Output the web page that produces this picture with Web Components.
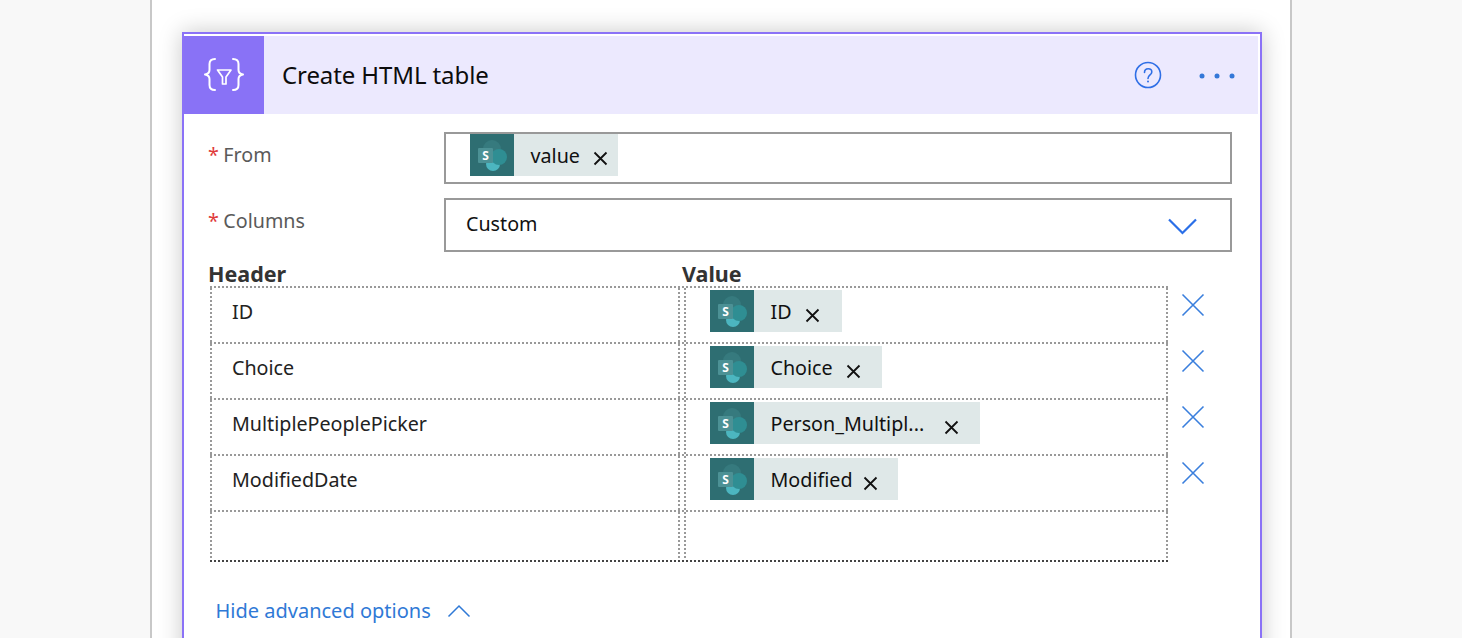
<!DOCTYPE html>
<html lang="en"><head><meta charset="utf-8"><title>Create HTML table</title>
<style>
html,body{margin:0;height:638px;overflow:hidden;background:#f8f8f8;font-family:"Noto Sans","Open Sans",sans-serif}
</style></head><body>
<flow-panel>
<action-card title="Create HTML table">
  <form-field label="From" style="--h:52px;--mt:18px"><token-pill style="--w:148px;--ml:24px;--xgap:13px;--xtop:3px">value</token-pill></form-field>
  <form-field label="Columns" select style="--h:54px;--mt:14px;--pl:20px">Custom</form-field>
  <kv-table>
    <kv-row key="ID"><token-pill style="--w:132px;--xgap:13.500px">ID</token-pill></kv-row>
    <kv-row key="Choice"><token-pill style="--w:172px;--xgap:13px">Choice</token-pill></kv-row>
    <kv-row key="MultiplePeoplePicker"><token-pill style="--w:270px;--xgap:20px">Person_Multipl...</token-pill></kv-row>
    <kv-row key="ModifiedDate"><token-pill style="--w:188px;--xgap:10.200px">Modified</token-pill></kv-row>
    <kv-row empty></kv-row>
  </kv-table>
  <advanced-toggle>Hide advanced options</advanced-toggle>
</action-card>
</flow-panel>
<script>
function def(name, css, html){
  customElements.define(name, class extends HTMLElement{
    connectedCallback(){
      if(this.shadowRoot) return;
      const r=this.attachShadow({mode:'open'});
      r.innerHTML='<style>'+css+'</style>'+(typeof html==='function'?html(this):html);
    }
  });
}
def('flow-panel',
 `:host{display:block;box-sizing:border-box;width:1142px;height:638px;margin-left:150px;background:#fff;border-left:2px solid #c8c8c8;border-right:2px solid #c8c8c8;padding:32px 28px 0 30px;overflow:hidden}`,
 `<slot></slot>`);
def('action-card',
 `:host{display:block;box-sizing:border-box;width:1080px;height:700px;border:2px solid #8b72f7;padding-top:2px;background:#fff;box-shadow:0 0 22px rgba(0,0,0,.22)}
  header{display:flex;align-items:center;height:78px;margin-right:2px;background:#ece9fe}
  .ic{width:80px;height:78px;background:#8972f6;display:flex;align-items:center;justify-content:center;flex:none}
  h1{margin:0 0 0 18px;font:400 24px/1 "Noto Sans",sans-serif;color:#0c0c0c;flex:1;letter-spacing:-.1px}
  .acts{display:flex;align-items:center}
  .help{display:block;margin-right:37.500px}
  .dots{display:block;margin-right:23px;position:relative;top:1px}`,
 h=>`<header><div class="ic"><svg width="42" height="38" viewBox="0 0 42 38" fill="none" stroke="#fff" stroke-width="2" stroke-linecap="round" stroke-linejoin="round"><path d="M12 3C8 3 6.500 4.500 6.500 8v6c0 2.500-1.500 4-4.500 4.500 3 .5 4.500 2 4.500 4.500v6c0 3.500 1.500 5 5.500 5"/><path d="M30 3c4 0 5.500 1.500 5.500 5v6c0 2.500 1.500 4 4.500 4.500-3 .5-4.500 2-4.500 4.500v6c0 3.500-1.500 5-5.500 5"/><path d="M14.500 14h13.500l-5 7v7h-3.500v-7z" stroke-width="1.700"/></svg></div>
  <h1>${h.getAttribute('title')}</h1>
  <div class="acts"><svg class="help" width="28" height="28" viewBox="0 0 28 28" fill="none" stroke="#2f6fe6" stroke-width="1.600"><circle cx="14" cy="14" r="12.500"/><path d="M10.500 11.500c0-2.200 1.600-3.700 3.700-3.700s3.600 1.400 3.600 3.200c0 3-3.800 3-3.800 6.500" stroke-linecap="round"/><circle cx="14" cy="20.500" r="1" fill="#2f6fe6" stroke="none"/></svg>
  <svg class="dots" width="36" height="6" viewBox="0 0 36 6" fill="#3478d8"><circle cx="3" cy="3" r="2.500"/><circle cx="18" cy="3" r="2.500"/><circle cx="33" cy="3" r="2.500"/></svg></div></header><slot></slot>`);
def('form-field',
 `:host{display:flex;margin-top:var(--mt,0);padding-left:24px}
  .lab{width:236px;flex:none;font-size:19.700px;color:#5a5a5a;line-height:27px;padding-top:10px;box-sizing:border-box;height:30px;margin-top:-1px}
  .lab i{font-style:normal;color:#e03b3b;margin-right:4.500px}
  .box{box-sizing:border-box;width:788px;height:var(--h);border:2px solid #999;display:flex;align-items:flex-start;padding-left:var(--pl,0);font-size:19.700px;color:#111;position:relative}
  .txt{line-height:48px}
  svg{position:absolute;right:33px;top:18px}`,
 h=>`<div class="lab"><i>*</i>${h.getAttribute('label')}</div><div class="box"><span class="txt"><slot></slot></span>${h.hasAttribute('select')?'<svg width="29" height="17" viewBox="0 0 29 17" fill="none" stroke="#2a6fe8" stroke-width="2.200"><path d="M1 1.500 14.500 15 28 1.500"/></svg>':''}</div>`);
def('sp-logo',
 `:host{display:block;width:44px;height:42px;flex:none;background:#2e6e72}svg{display:block}text{font:700 12px "Noto Sans",sans-serif;fill:#fff}`,
 `<svg width="44" height="42" viewBox="0 0 44 42"><circle cx="22" cy="15" r="9" fill="#367a7e"/><circle cx="23" cy="30" r="7" fill="#4cb6c0"/><circle cx="29" cy="23" r="8" fill="#2f8e93"/><rect x="8" y="14" width="15" height="15" rx="1" fill="#4c9195"/><text x="15.500" y="26" text-anchor="middle">S</text></svg>`);
def('token-pill',
 `:host{display:flex;align-items:center;box-sizing:border-box;width:var(--w);height:42px;margin-left:var(--ml,0);background:#dfe8e8;color:#111;font-size:19.700px;white-space:nowrap}
  .t{margin-left:16.500px;line-height:42px;padding-top:2px}
  svg{margin-left:var(--xgap);flex:none;position:relative;top:var(--xtop,4px)}`,
 `<sp-logo></sp-logo><span class="t"><slot></slot></span><svg width="15" height="15" viewBox="0 0 15 15" stroke="#111" stroke-width="1.800"><path d="M1.500 1.500l12 12M13.500 1.500l-12 12"/></svg>`);
def('kv-table',
 `:host{display:block;margin-top:10px;padding-left:24px}
  .h{display:grid;grid-template-columns:474px 1fr;font-weight:700;font-size:21.500px;line-height:24px;color:#333;height:24px}`,
 `<div class="h"><span>Header</span><span>Value</span></div><slot></slot>`);
def('kv-row',
 `:host{display:flex;align-items:flex-start;margin-left:2px}
  .w{box-sizing:border-box;width:958px;height:56px;display:flex;justify-content:space-between;padding-top:2px;flex:none;
     background:linear-gradient(90deg,#999 2px,transparent 2px) top left/4px 2px repeat-x}
  :host([empty]) .w{height:52px;padding-bottom:2px;
     background:linear-gradient(90deg,#999 2px,transparent 2px) top left/4px 2px repeat-x,linear-gradient(90deg,#444 2px,transparent 2px) bottom left/4px 2px repeat-x}
  .c{box-sizing:border-box;height:100%;font-size:19.700px;color:#222;display:flex;align-items:flex-start;
     background:linear-gradient(#999 2px,transparent 2px) top left/2px 4px repeat-y,linear-gradient(#999 2px,transparent 2px) top right/2px 4px repeat-y}
  .k{width:470px;padding-left:22px;line-height:48px}
  .v{width:484px;padding:2px 0 0 26px}
  svg{margin:7px 0 0 12.500px;flex:none}`,
 h=>`<div class="w"><div class="c k">${h.getAttribute('key')||''}</div><div class="c v"><slot></slot></div></div>${h.hasAttribute('empty')?'':'<svg width="24" height="24" viewBox="0 0 24 24" stroke="#3a7fdd" stroke-width="1.600"><path d="M1.500 1.500l21 21M22.500 1.500l-21 21"/></svg>'}`);
def('advanced-toggle',
 `:host{display:flex;align-items:center;margin:35px 0 0 31.500px;color:#2f79d6;font-size:20px;line-height:28px}
  svg{margin-left:16px}`,
 `<slot></slot><svg width="24" height="14" viewBox="0 0 24 14" fill="none" stroke="#2f79d6" stroke-width="1.500"><path d="M1.500 12.500 12 2l10.500 10.500"/></svg>`);
</script>
</body></html>
